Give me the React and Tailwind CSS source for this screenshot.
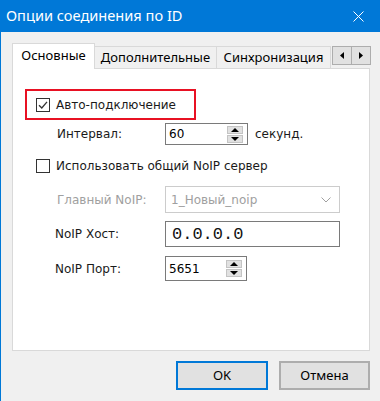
const ui = "font-['Noto_Sans',sans-serif]"
const form = "font-['DejaVu_Sans',sans-serif]"

function CheckBox({ checked }) {
  return (
    <svg width="14" height="14" viewBox="0 0 14 14" className="shrink-0">
      <rect x="0.5" y="0.5" width="13" height="13" fill="#fff" stroke="#333" />
      {checked && <path d="M3 7.2 L5.8 10 L11 3.8" fill="none" stroke="#333" strokeWidth="1.3" />}
    </svg>
  )
}

function Spinner() {
  return (
    <div className="flex flex-col gap-[1px] w-[16px] mr-[4px]">
      {['up', 'down'].map(dir => (
        <div key={dir} className="h-[8px] bg-[#e1e1e1] border border-[#c4c4c4] flex items-center justify-center">
          <svg width="8" height="4" viewBox="0 0 8 4">
            {dir === 'up' ? <path d="M0 4 L4 0 L8 4 Z" fill="#000" /> : <path d="M0 0 L8 0 L4 4 Z" fill="#000" />}
          </svg>
        </div>
      ))}
    </div>
  )
}

function Label({ children, grey, left = 'ml-[44px]', width = 'w-[108px]' }) {
  return (
    <span className={`${left} ${width} shrink-0 text-[12px] ${grey ? 'text-[#a0a0a0]' : 'text-[#1a1a1a]'}`}>
      {children}
    </span>
  )
}

export default function App() {
  return (
    <div className={`w-[380px] h-[401px] bg-[#f0f0f0] border-l border-[#0078d7] flex flex-col overflow-hidden ${ui}`}>
      {/* title bar */}
      <div className="h-[32px] shrink-0 bg-[#0078d7] flex items-center justify-between pl-[5px] pr-[16px] text-white">
        <span className="text-[14.6px]">Опции соединения по ID</span>
        <svg width="11" height="11" viewBox="0 0 11 11">
          <path d="M0.5 0.5 L10.5 10.5 M10.5 0.5 L0.5 10.5" stroke="#fff" strokeWidth="1" />
        </svg>
      </div>

      <div className="pl-[11px] pt-[11px]">
        {/* tabs */}
        <div className="flex items-end h-[26px] text-[13px] text-[#000]">
          <div className="relative z-10 h-[26px] w-[83px] bg-white border-x border-t border-[#d9d9d9] flex items-center justify-center pb-[1px]">
            Основные
          </div>
          <div className="h-[22px] mb-[1px] w-[122px] bg-[#f0f0f0] border-t border-r border-[#d9d9d9] flex items-center justify-center">
            Дополнительные
          </div>
          <div className="h-[22px] mb-[1px] w-[114px] bg-[#f0f0f0] border-t border-r border-[#d9d9d9] flex items-center justify-center">
            Синхронизация
          </div>
          <div className="flex self-start mt-[3px] ml-[1px]">
            <div className="w-[20px] h-[19px] bg-[#e1e1e1] border border-[#adadad] flex items-center justify-center">
              <svg width="4" height="7" viewBox="0 0 4 7"><path d="M4 0 L0 3.5 L4 7 Z" fill="#000" /></svg>
            </div>
            <div className="w-[19px] h-[19px] bg-[#e1e1e1] border border-l-0 border-[#adadad] flex items-center justify-center">
              <svg width="4" height="7" viewBox="0 0 4 7"><path d="M0 0 L4 3.5 L0 7 Z" fill="#000" /></svg>
            </div>
          </div>
        </div>

        {/* panel */}
        <div className={`-mt-[1px] w-[358px] h-[283px] bg-white border border-[#d9d9d9] flex flex-col ${form}`}>
          <div className="ml-[12px] mt-[20px] w-[171px] h-[31px] border-2 border-[#e81123] flex items-center pl-[9px] gap-[6px]">
            <CheckBox checked />
            <span className="text-[12px] text-[#1a1a1a]">Авто-подключение</span>
          </div>

          <div className="mt-[3px] flex items-center">
            <Label>Интервал:</Label>
            <div className="w-[83px] h-[22px] border border-[#7a7a7a] flex items-center">
              <span className="flex-1 pl-[3px] text-[12px]">60</span>
              <Spinner />
            </div>
            <span className="ml-[7px] text-[12px] text-[#1a1a1a]">секунд.</span>
          </div>

          <div className="mt-[11px] h-[20px] flex items-center ml-[23px] gap-[6px]">
            <CheckBox />
            <span className="text-[12px] text-[#1a1a1a]">Использовать общий NoIP сервер</span>
          </div>

          <div className="mt-[10px] flex items-center">
            <Label grey>Главный NoIP:</Label>
            <div className="w-[175px] h-[27px] border border-[#cccccc] flex items-center justify-between pl-[5px] pr-[8px]">
              <span className="text-[12px] text-[#a0a0a0]">1_Новый_noip</span>
              <svg width="10" height="6" viewBox="0 0 10 6"><path d="M0.5 0.5 L5 5 L9.5 0.5" fill="none" stroke="#a0a0a0" /></svg>
            </div>
          </div>

          <div className="mt-[8px] flex items-center">
            <Label left="ml-[42px]" width="w-[110px]">NoIP Хост:</Label>
            <div className="w-[175px] h-[26px] border border-[#7a7a7a] flex items-center pl-[6px]">
              <span className="font-['Liberation_Mono',monospace] text-[17px] leading-none text-[#111]">0.0.0.0</span>
            </div>
          </div>

          <div className="mt-[9px] flex items-center">
            <Label left="ml-[42px]" width="w-[110px]">NoIP Порт:</Label>
            <div className="w-[82px] h-[25px] border border-[#7a7a7a] flex items-center">
              <span className="flex-1 pl-[3px] text-[12px]">5651</span>
              <Spinner />
            </div>
          </div>
        </div>
      </div>

      {/* buttons */}
      <div className="mt-[10px] ml-[175px] flex gap-[11px] text-[13px] text-black">
        <button className="w-[92px] h-[29px] bg-[#e1e1e1] border-2 border-[#0078d7]">OK</button>
        <button className="w-[91px] h-[29px] bg-[#e1e1e1] border-2 border-[#adadad]">Отмена</button>
      </div>
    </div>
  )
}
